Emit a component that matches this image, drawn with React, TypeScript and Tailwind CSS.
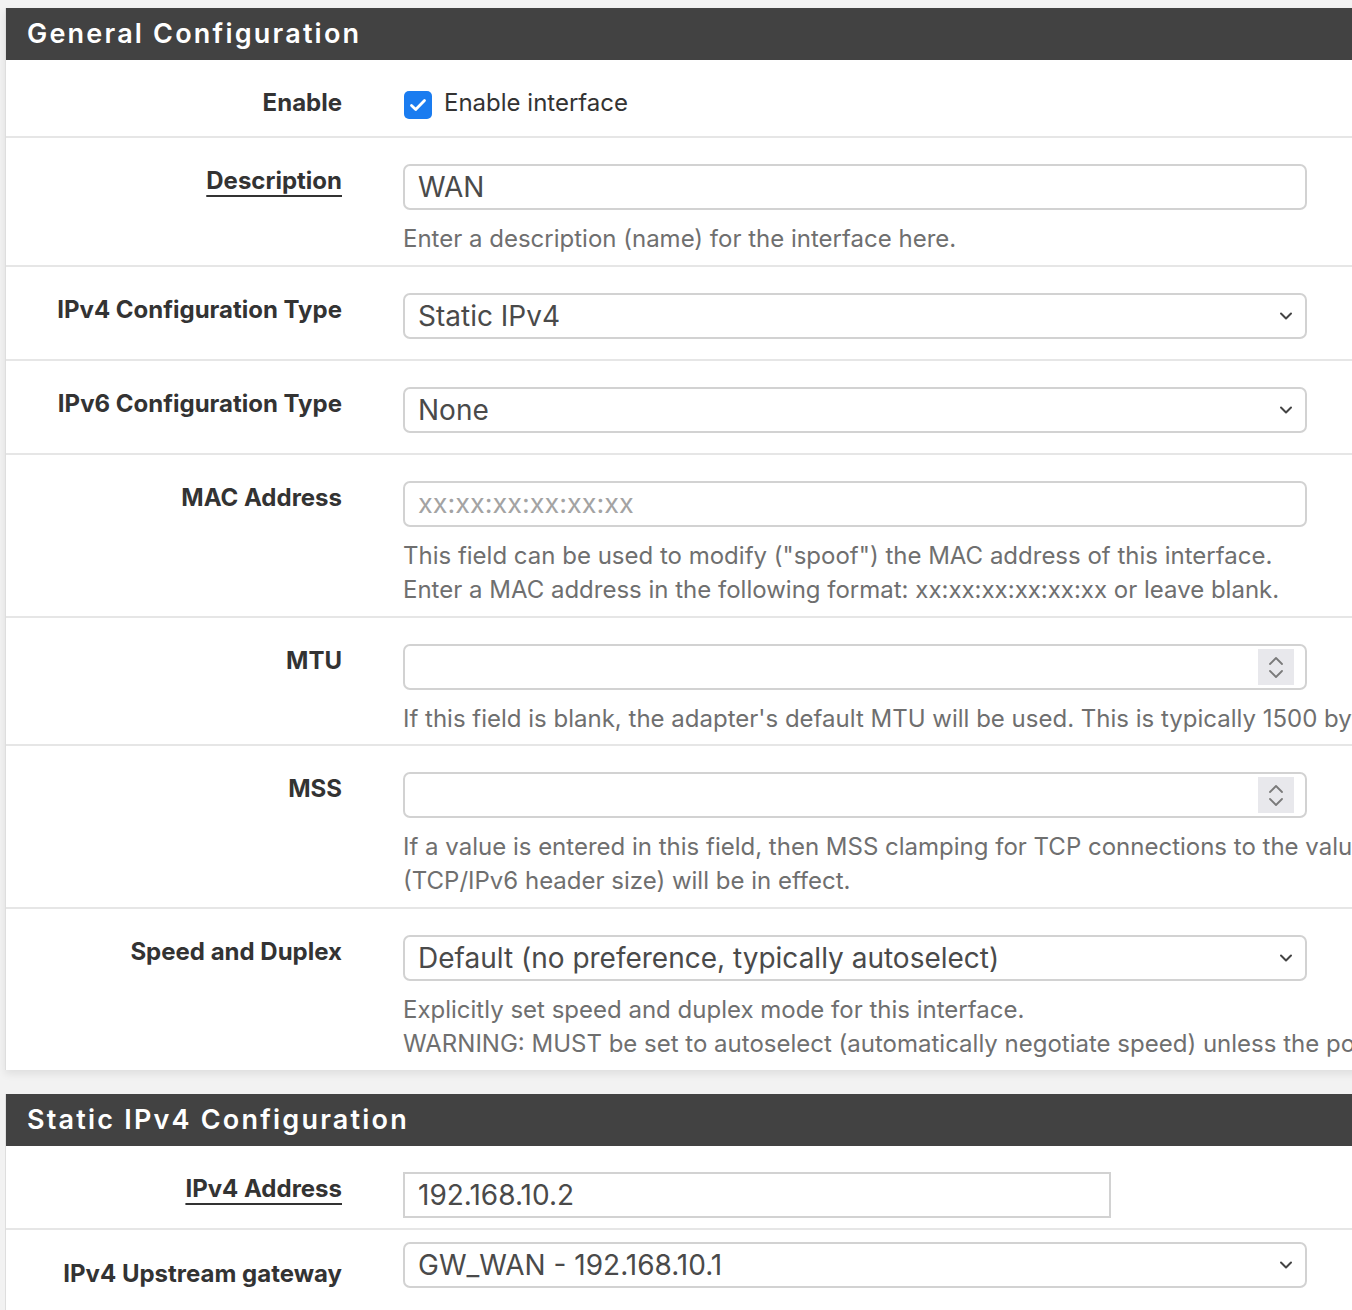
import React from 'react';

const FONT = { fontFamily: 'Inter, "Noto Sans", sans-serif' };

const Chevron = () => (
  <svg width="14" height="9" viewBox="0 0 14 9" className="absolute right-[12px] top-1/2 -translate-y-1/2">
    <path d="M2 2l5 5 5-5" fill="none" stroke="#444" strokeWidth="2" strokeLinecap="round" strokeLinejoin="round" />
  </svg>
);

const Spinner = () => (
  <div className="absolute right-[11px] top-1/2 -translate-y-1/2 w-[36px] h-[36px] bg-[#e8e8ec] flex flex-col items-center justify-center gap-[5px]">
    <svg width="16" height="9" viewBox="0 0 16 9">
      <path d="M2 8l6-6 6 6" fill="none" stroke="#7a7a7a" strokeWidth="1.8" strokeLinecap="round" strokeLinejoin="round" />
    </svg>
    <svg width="16" height="9" viewBox="0 0 16 9">
      <path d="M2 1l6 6 6-6" fill="none" stroke="#7a7a7a" strokeWidth="1.8" strokeLinecap="round" strokeLinejoin="round" />
    </svg>
  </div>
);

const PanelHeader = ({ title }: { title: string }) => (
  <div className="bg-[#424242] h-[52px] flex items-center pl-[21px]">
    <h2 className="text-white text-[27px] font-semibold tracking-[2.2px]">{title}</h2>
  </div>
);

interface RowProps {
  label: string;
  underline?: boolean;
  help?: string[];
  last?: boolean;
  pb?: string;
  children: React.ReactNode;
}

const Label = ({ text, underline }: { text: string; underline?: boolean }) => (
  <span
    className={`text-[24px] leading-[34px] font-bold text-[#333] ${
      underline ? 'underline underline-offset-[6px] decoration-2' : ''
    }`}
  >
    {text}
  </span>
);

const Row = ({ label, underline, help, last, pb, children }: RowProps) => (
  <div
    className={`flex pt-[26px] ${last ? '' : 'border-b-2 border-[#e6e6e6]'} ${pb ?? (help ? 'pb-[9px]' : 'pb-[20px]')}`}
  >
    <div className="w-[336px] shrink-0 text-right">
      <Label text={label} underline={underline} />
    </div>
    <div className="ml-[61px] shrink-0">
      {children}
      {help && (
        <div className="mt-[12px] text-[24px] leading-[34px] text-[#6f6f6f] whitespace-nowrap">
          {help.map((h) => (
            <div key={h}>{h}</div>
          ))}
        </div>
      )}
    </div>
  </div>
);

const TextInput = ({
  value,
  placeholder,
  spinner,
  square,
  width = 'w-[904px]',
}: {
  value?: string;
  placeholder?: string;
  spinner?: boolean;
  square?: boolean;
  width?: string;
}) => (
  <div
    className={`relative ${width} h-[46px] border-2 border-[#d2d2d2] ${square ? '' : 'rounded-[7px]'} bg-white flex items-center pl-[13px] text-[28px]`}
  >
    {value ? (
      <span className="text-[#4a4a4a]">{value}</span>
    ) : (
      <span className="text-[#a3a3a3] text-[27px]">{placeholder}</span>
    )}
    {spinner && <Spinner />}
  </div>
);

const SelectBox = ({ value }: { value: string }) => (
  <div className="relative w-[904px] h-[46px] border-2 border-[#d2d2d2] rounded-[7px] bg-white flex items-center pl-[13px] text-[28px] text-[#4a4a4a]">
    <span>{value}</span>
    <Chevron />
  </div>
);

export default function App() {
  return (
    <div className="min-h-[1310px] bg-[#f2f2f2] overflow-hidden pt-[8px]" style={FONT}>
      <div className="ml-[5px] w-[1600px] bg-white border-l border-[#dedede] shadow-[0_4px_8px_rgba(0,0,0,0.08)]">
        <PanelHeader title="General Configuration" />
        <div className="flex border-b-2 border-[#e6e6e6] pt-[26px] pb-[16px]">
          <div className="w-[336px] shrink-0 text-right">
            <Label text="Enable" />
          </div>
          <label className="ml-[62px] flex items-center gap-[12px]">
            <span className="w-[28px] h-[28px] rounded-[5px] bg-[#1a7cf0] flex items-center justify-center mt-[4px]">
              <svg width="18" height="14" viewBox="0 0 18 14">
                <path
                  d="M2.5 7.5l4.2 4L15.5 2.5"
                  fill="none"
                  stroke="white"
                  strokeWidth="2.8"
                  strokeLinecap="round"
                  strokeLinejoin="round"
                />
              </svg>
            </span>
            <span className="text-[24px] leading-[34px] text-[#333]">Enable interface</span>
          </label>
        </div>
        <Row label="Description" underline help={['Enter a description (name) for the interface here.']}>
          <TextInput value="WAN" />
        </Row>
        <Row label="IPv4 Configuration Type">
          <SelectBox value="Static IPv4" />
        </Row>
        <Row label="IPv6 Configuration Type">
          <SelectBox value="None" />
        </Row>
        <Row
          label="MAC Address"
          help={[
            'This field can be used to modify ("spoof") the MAC address of this interface.',
            'Enter a MAC address in the following format: xx:xx:xx:xx:xx:xx or leave blank.',
          ]}
        >
          <TextInput placeholder="xx:xx:xx:xx:xx:xx" />
        </Row>
        <Row
          label="MTU"
          pb="pb-[8px]"
          help={["If this field is blank, the adapter's default MTU will be used. This is typically 1500 bytes"]}
        >
          <TextInput spinner />
        </Row>
        <Row
          label="MSS"
          help={[
            'If a value is entered in this field, then MSS clamping for TCP connections to the value',
            '(TCP/IPv6 header size) will be in effect.',
          ]}
        >
          <TextInput spinner />
        </Row>
        <Row
          label="Speed and Duplex"
          last
          help={[
            'Explicitly set speed and duplex mode for this interface.',
            'WARNING: MUST be set to autoselect (automatically negotiate speed) unless the port',
          ]}
        >
          <SelectBox value="Default (no preference, typically autoselect)" />
        </Row>
      </div>

      <div className="mt-[24px] ml-[5px] w-[1600px] bg-white border-l border-[#dedede]">
        <PanelHeader title="Static IPv4 Configuration" />
        <Row label="IPv4 Address" underline pb="pb-[10px]">
          <TextInput value="192.168.10.2" square width="w-[708px]" />
        </Row>
        <div className="flex pt-[12px] pb-[22px]">
          <div className="w-[336px] shrink-0 text-right pt-[15px]">
            <Label text="IPv4 Upstream gateway" />
          </div>
          <div className="ml-[61px]">
            <SelectBox value="GW_WAN - 192.168.10.1" />
          </div>
        </div>
      </div>
    </div>
  );
}
